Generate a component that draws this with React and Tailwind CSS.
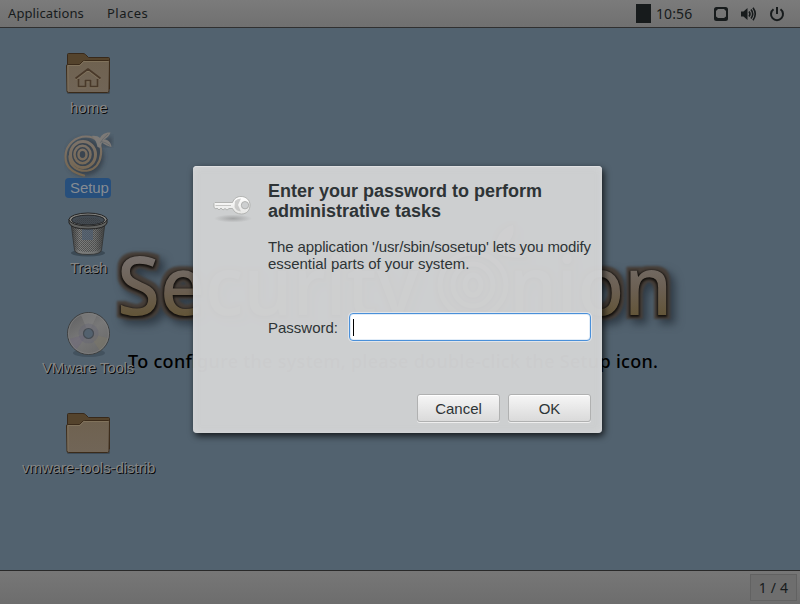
import React from "react";

const HOUSE = "M9.500 23.500 L22 14 L34.500 23.500 M12.500 24 V31.500 H19.500 V25.500 H24.500 V31.500 H31.500 V24";

function Folder({ home }) {
  const id = home ? "front-home" : "front-plain";
  return (
    <svg width="48" height="44" viewBox="0 0 48 44" className="block">
      <defs>
        <linearGradient id={id} x1="0" y1="0" x2="0" y2="1">
          <stop offset="0" stopColor="#6f6250" />
          <stop offset="1" stopColor="#716557" />
        </linearGradient>
      </defs>
      <rect x="3" y="39" width="43" height="3" rx="1.5" fill="#25303a" opacity=".45" />
      <path d="M3.500 37 V2.500 Q3.500 1.500 4.500 1.500 H19 Q20.500 1.500 21.500 2.500 L24.500 5.500 H44.500 Q45.500 5.500 45.500 6.500 V37 Z" fill="#54432c" stroke="#38291a" />
      <path d="M2.500 14 Q2.500 12.500 3.500 12.500 H15.500 L19 9 Q19.500 8.500 20.500 8.500 H44.500 Q45.500 8.500 45.500 9.500 L45 39 Q45 40.500 43.500 40.500 H4.500 Q3 40.500 3 39 Z" fill={"url(#" + id + ")"} stroke="#3b2b1a" />
      <path d="M4 39 V13.500 H16 L19.500 9.500 H44.500" fill="none" stroke="#867760" strokeWidth=".8" />
      {home && (
        <g transform="translate(2,3)" fill="none" strokeWidth="1.700" strokeLinejoin="round">
          <path d={HOUSE} stroke="#82755f" transform="translate(0,1)" />
          <path d={HOUSE} stroke="#49392a" />
        </g>
      )}
    </svg>
  );
}

function SetupIcon() {
  return (
    <svg width="50" height="48" viewBox="0 0 50 48" className="block">
      <defs>
        <filter id="onion-soft" x="-20%" y="-20%" width="140%" height="140%">
          <feGaussianBlur stdDeviation="2" />
        </filter>
        <linearGradient id="onion-ring" gradientUnits="userSpaceOnUse" x1="0" y1="2" x2="0" y2="44">
          <stop offset="0" stopColor="#7d756e" />
          <stop offset="1" stopColor="#75654e" />
        </linearGradient>
      </defs>
      <ellipse cx="21" cy="25" rx="19" ry="19" fill="#303b45" opacity=".75" filter="url(#onion-soft)" />
      <path d="M36 14 Q40 6 48 4 L48 14Z" fill="#303b45" opacity=".6" filter="url(#onion-soft)" />
      <g fill="none" stroke="url(#onion-ring)" strokeLinecap="round">
        <path d="M20 43.500 C10 41 1 36 1.500 24 C2 12 12 4.500 22 4.500 C32 4.500 38 11 37 22 C36 31 31 37 24 38.500 C14 40 5 34 5.500 24" strokeWidth="2.200" />
        <ellipse cx="19" cy="22.500" rx="12.500" ry="13" strokeWidth="3" />
        <ellipse cx="18.500" cy="22.500" rx="8" ry="8.700" strokeWidth="2.500" />
        <ellipse cx="18.500" cy="22.500" rx="4" ry="4.700" strokeWidth="2.500" />
      </g>
      <path d="M33.500 15 C32.500 10 31 6 27.500 4 C31 3.500 34 4 36 6 C37.500 2.500 41.500 0 46.500 .5 C45.500 4 43 6 40 7.500 C44 7.500 47 10 47.500 15 C43.500 14 40.500 12.500 38 10.500 L36.500 16Z" fill="#7d7a77" />
      <path d="M36 11 Q39 6 44 2 M37 9.500 Q42 10 46 13.500" stroke="#5e6468" fill="none" strokeWidth=".7" />
    </svg>
  );
}

function TrashIcon() {
  return (
    <svg width="42" height="46" viewBox="0 0 42 46" className="block">
      <defs>
        <linearGradient id="can" x1="0" x2="1">
          <stop offset="0" stopColor="#3f4040" />
          <stop offset=".25" stopColor="#7d7e7d" />
          <stop offset=".7" stopColor="#727473" />
          <stop offset="1" stopColor="#3e4040" />
        </linearGradient>
        <pattern id="mesh" width="2" height="2" patternUnits="userSpaceOnUse">
          <rect width="1" height="1" fill="#333" />
          <rect x="1" y="1" width="1" height="1" fill="#3d3d3d" />
        </pattern>
      </defs>
      <ellipse cx="21" cy="41" rx="17" ry="3.500" fill="#26313b" opacity=".5" />
      <path d="M4 11 L7.500 38 Q8 42.500 21 42.500 Q34 42.500 34.500 38 L38 11 Z" fill="url(#can)" stroke="#303131" strokeWidth=".8" />
      <path d="M5 14 L8 36 Q10 40 21 40 Q32 40 34 36 L37 14 Z" fill="url(#mesh)" opacity=".6" />
      <rect x="15" y="17" width="11" height="11" fill="#4c5c70" opacity=".65" />
      <path d="M2 7 V11 Q4 17 21 17 Q38 17 40 11 V7" fill="#60615f" stroke="#222" />
      <ellipse cx="21" cy="7.500" rx="19" ry="6.500" fill="#82827f" stroke="#262626" />
      <ellipse cx="21" cy="8" rx="16.500" ry="4.900" fill="#434b53" stroke="#242628" />
      <ellipse cx="21" cy="9" rx="13" ry="3.500" fill="url(#mesh)" opacity=".5" />
    </svg>
  );
}

function DiscIcon() {
  return (
    <svg width="46" height="48" viewBox="0 0 46 48" className="block">
      <defs>
        <linearGradient id="disc" x1=".1" y1="0" x2=".8" y2="1">
          <stop offset="0" stopColor="#606061" />
          <stop offset=".5" stopColor="#787878" />
          <stop offset="1" stopColor="#696969" />
        </linearGradient>
      </defs>
      <ellipse cx="23" cy="42" rx="16" ry="4" fill="#34414d" opacity=".5" />
      <circle cx="22.500" cy="22.500" r="21" fill="url(#disc)" stroke="#3d3f40" />
      <path d="M22.500 22.500 L3 28 Q5 35 10 39Z" fill="#6d687a" opacity=".5" />
      <path d="M22.500 22.500 L34 40 Q41 34 42 27Z" fill="#7c7767" opacity=".5" />
      <path d="M22.500 22.500 L15 4 Q25 0 31 4Z" fill="#848484" opacity=".5" />
      <circle cx="22.500" cy="22.500" r="10" fill="#626174" opacity=".35" />
      <circle cx="22.500" cy="22.500" r="20" fill="none" stroke="#858585" strokeWidth=".6" />
      <circle cx="22.500" cy="22.500" r="5" fill="#53616e" stroke="#454b52" strokeWidth="1.200" />
    </svg>
  );
}

function KeyIcon() {
  return (
    <svg width="44" height="32" viewBox="0 0 44 32" className="block">
      <defs>
        <linearGradient id="key" x1="0" y1="0" x2="0" y2="1">
          <stop offset="0" stopColor="#ffffff" />
          <stop offset="1" stopColor="#e6e6e4" />
        </linearGradient>
        <radialGradient id="key-shade">
          <stop offset="0" stopColor="#555" stopOpacity=".35" />
          <stop offset="1" stopColor="#555" stopOpacity="0" />
        </radialGradient>
      </defs>
      <ellipse cx="22" cy="26.500" rx="19" ry="4" fill="url(#key-shade)" />
      <path fillRule="evenodd" d="M4 10.500 H21.500 C23 6.500 26 4.500 30 4.500 C35 4.500 39 8 39 13 C39 18.500 35.500 22 30.500 22 C26 22 23 20 21.500 16.500 H18 L16 18 L14 16.500 L12 18 L10 16 L8 18 L6 16 L5 17 L3 15.500 V11.500 Z M34 9.500 A3.700 3.700 0 1 0 34.010 16.900 A3.700 3.700 0 0 0 34 9.500Z" fill="url(#key)" stroke="#a7a8a6" strokeWidth=".8" />
      <path d="M4.500 13.500 H20" stroke="#c6c6c4" />
      <path d="M24 9 Q26 6.500 30 6.500 L27 13 L30 19.500 Q25 19 23.500 15Z" fill="#bbbbb9" opacity=".7" />
    </svg>
  );
}

function Label({ children, className }) {
  return (
    <span className={"absolute whitespace-nowrap text-[15px] leading-[18px] text-[#858585] [text-shadow:1px_1px_0_#080808] " + className}>
      {children}
    </span>
  );
}

function Wordmark() {
  return (
    <svg className="absolute left-0 top-0" width="800" height="604" viewBox="0 0 800 604">
      <defs>
        <linearGradient id="brass" gradientUnits="userSpaceOnUse" x1="0" y1="255" x2="0" y2="318">
          <stop offset="0" stopColor="#77706d" />
          <stop offset=".55" stopColor="#6b5f52" />
          <stop offset="1" stopColor="#625436" />
        </linearGradient>
        <filter id="bevel" filterUnits="userSpaceOnUse" x="90" y="220" width="610" height="130" colorInterpolationFilters="sRGB">
          <feMorphology in="SourceAlpha" operator="dilate" radius="4" result="wide" />
          <feGaussianBlur in="wide" stdDeviation="4" result="wideSoft" />
          <feOffset in="wideSoft" dx="5" dy="5" result="cast" />
          <feFlood floodColor="#1d2730" floodOpacity=".65" />
          <feComposite in2="cast" operator="in" result="shadow" />
          <feGaussianBlur in="wide" stdDeviation="1" result="rimShape" />
          <feFlood floodColor="#463e38" />
          <feComposite in2="rimShape" operator="in" result="rim" />
          <feMorphology in="SourceAlpha" operator="dilate" radius="1" result="edge" />
          <feGaussianBlur in="edge" stdDeviation="1" result="edgeSoft" />
          <feOffset in="edgeSoft" dy="1" result="edgeLow" />
          <feFlood floodColor="#120f0c" />
          <feComposite in2="edgeLow" operator="in" result="line" />
          <feMerge>
            <feMergeNode in="shadow" />
            <feMergeNode in="rim" />
            <feMergeNode in="line" />
            <feMergeNode in="SourceGraphic" />
          </feMerge>
        </filter>
      </defs>
      <g filter="url(#bevel)" fill="url(#brass)" fontFamily="'Noto Sans', sans-serif" fontSize="82" fontWeight="500">
        <text x="117" y="315" textLength="301" lengthAdjust="spacingAndGlyphs">Security</text>
        <text x="509" y="315" textLength="163" lengthAdjust="spacingAndGlyphs">nion</text>
        <ellipse cx="473" cy="285" rx="33" ry="32" fill="none" stroke="url(#brass)" strokeWidth="5" />
        <ellipse cx="473" cy="285" rx="20" ry="21" fill="none" stroke="url(#brass)" strokeWidth="5" />
        <ellipse cx="473" cy="285" rx="8" ry="10" fill="none" stroke="url(#brass)" strokeWidth="5" />
        <path d="M498 254 C493 240 500 229 513 225 C515 234 511 241 504 246 C513 243 523 249 526 257 C514 259 505 256 498 254Z" />
      </g>
      <text x="128" y="368" fontFamily="'Noto Sans', sans-serif" fontSize="18" fontWeight="500" textLength="530" fill="#000">
        To configure the system, please double-click the Setup icon.
      </text>
    </svg>
  );
}

function Button({ children }) {
  return (
    <button className="h-[28px] w-[83px] rounded-[3px] border border-[#b0b1b1] bg-linear-to-b from-[#f6f6f6] to-[#dadada] pt-px text-[15px] leading-[18px] shadow-[0_1px_0_#eeeeee,inset_0_1px_0_#ffffff]">
      {children}
    </button>
  );
}

function Dialog() {
  return (
    <section className="absolute left-[193px] top-[166px] flex h-[267px] w-[409px] rounded-[4px] bg-[#d2d3d4]/[0.97] pl-[18px] pr-[11px] text-[#2e3436] shadow-[2px_3px_7px_rgba(0,0,0,0.75),inset_0_1px_0_#dedfe1,inset_0_0_6px_rgba(225,226,230,0.5)]">
      <div className="w-[57px] shrink-0 pt-[26px]">
        <KeyIcon />
      </div>
      <div className="flex min-w-0 flex-1 flex-col pt-[15px]">
        <h1 className="whitespace-nowrap text-[18px] font-bold leading-[20px]">
          Enter your password to perform
          <br />
          administrative tasks
        </h1>
        <p className="mt-[17px] whitespace-nowrap text-[15px] leading-[17px] tracking-[-0.125px]">
          The application '/usr/sbin/sosetup' lets you modify
          <br />
          <span className="tracking-[-0.04px]">essential parts of your system.</span>
        </p>
        <label className="mt-[41px] flex h-[28px] items-center justify-between text-[15px]">
          <span className="pt-[2px]">Password:</span>
          <span className="flex h-[28px] w-[242px] items-center rounded-[4px] border border-[#4a90d9] bg-white pl-[3px] shadow-[0_0_0_1px_#e2e5e9,inset_0_0_0_1px_#e2edf8]">
            <span className="h-[17px] w-px bg-black" />
          </span>
        </label>
        <div className="mt-[53px] flex justify-end gap-2">
          <Button>Cancel</Button>
          <Button>OK</Button>
        </div>
      </div>
    </section>
  );
}

export default function App() {
  return (
    <main className="relative flex h-[604px] w-[800px] flex-col overflow-hidden bg-[#52626f] font-['Liberation_Sans',Arial,sans-serif]">
      <header className="flex h-[28px] shrink-0 items-center border-b border-[#303030] bg-linear-to-b from-[#7b7b7b] to-[#707070] pl-2 font-['Noto_Sans',sans-serif] text-[13px] text-[#171b1c]">
        <span className="w-[99px] tracking-[0.1px]">Applications</span>
        <span className="tracking-[0.5px]">Places</span>
        <span className="ml-auto mr-[5px] h-[19px] w-[15px] bg-[#171b1c]" />
        <span className="w-[58px] text-[14px] tracking-[0.1px]">10:56</span>
        <svg width="86" height="26" viewBox="0 0 86 26" fill="none" stroke="#171b1c">
          <rect x="1" y="7" width="12" height="12" rx="1.500" strokeWidth="2" />
          <path d="M2 8 H4 L2 10Z M12 8 H10 L12 10Z M2 18 V15.500 L4 17 H10 L12 15.500 V18Z" fill="#171b1c" stroke="none" />
          <path d="M27 10.500 H29.500 L33.500 7 V19 L29.500 15.500 H27Z" fill="#171b1c" stroke="none" />
          <path d="M35 10.500 Q37 13 35 15.500 M37 8.500 Q40.500 13 37 17.500 M39 6.800 Q43.500 13 39 19.200" strokeWidth="1.600" />
          <path d="M59.500 8.300 A6 6 0 1 0 66.500 8.300 M63 6 V13" strokeWidth="2" />
        </svg>
      </header>

      <div className="flex-1" />

      <footer className="flex h-[34px] shrink-0 items-center justify-end border-t border-[#292929] bg-linear-to-b from-[#777777] to-[#6d6d6d] pr-[3px]">
        <span className="flex h-[27px] w-[47px] items-center justify-center border border-[#626262] bg-[#6e6e6e] pb-px font-['Noto_Sans',sans-serif] text-[14px] tracking-[0.2px] text-[#171b1c]">
          1 / 4
        </span>
      </footer>

      <Wordmark />

      <div className="absolute left-[64px] top-[52px]"><Folder home /></div>
      <Label className="left-[70px] top-[99px]">home</Label>

      <div className="absolute left-[64px] top-[132px]"><SetupIcon /></div>
      <span className="absolute left-[65px] top-[178px] h-[20px] w-[46px] rounded-[4px] bg-[#274f7c] pl-[5px] text-[15px] leading-[20px] tracking-[-0.1px] text-[#858b92]">Setup</span>

      <div className="absolute left-[67px] top-[212px]"><TrashIcon /></div>
      <Label className="left-[70px] top-[259px] tracking-[-0.1px]">Trash</Label>

      <div className="absolute left-[66px] top-[311px]"><DiscIcon /></div>
      <Label className="left-[42px] top-[359px] tracking-[-0.15px]">VMware Tools</Label>

      <div className="absolute left-[64px] top-[412px]"><Folder /></div>
      <Label className="left-[22px] top-[459px] tracking-[-0.05px]">vmware-tools-distrib</Label>

      <Dialog />
    </main>
  );
}
